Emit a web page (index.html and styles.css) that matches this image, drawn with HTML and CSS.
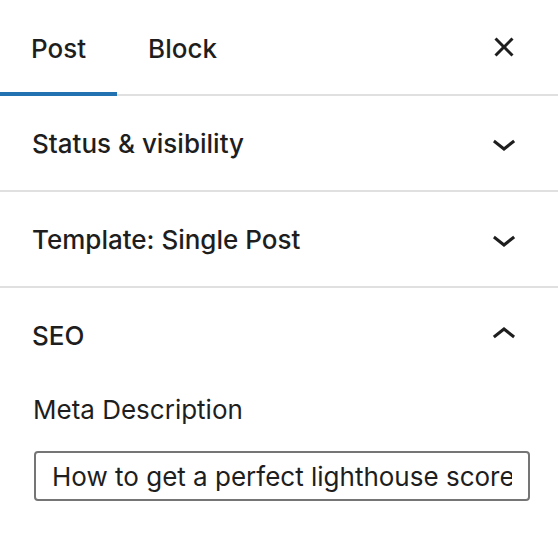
FILE: index.html
```html
<!DOCTYPE html>
<html lang="en">
<head>
<meta charset="utf-8">
<title>Post settings</title>
<link rel="stylesheet" href="styles.css">
</head>
<body>
<div class="sidebar">
  <div class="tabs">
    <div class="tab is-active">Post</div>
    <div class="tab">Block</div>
    <button class="icon-btn close" aria-label="Close settings">
      <svg viewBox="0 0 24 24" width="48" height="48"><path d="M12 13.06l3.712 3.713 1.061-1.06L13.061 12l3.713-3.712-1.06-1.06L12 10.938 8.288 7.227l-1.061 1.06L10.939 12l-3.712 3.712 1.06 1.061L12 13.061z"/></svg>
    </button>
  </div>

  <div class="panel">
    <div class="panel-toggle">
      <span class="panel-title">Status &amp; visibility</span>
      <span class="icon-btn"><svg viewBox="0 0 24 24" width="48" height="48"><path d="M17.5 11.6L12 16l-5.5-4.4.9-1.2L12 14l4.6-3.6 1 1.2z"/></svg></span>
    </div>
  </div>

  <div class="panel">
    <div class="panel-toggle">
      <span class="panel-title">Template: Single Post</span>
      <span class="icon-btn"><svg viewBox="0 0 24 24" width="48" height="48"><path d="M17.5 11.6L12 16l-5.5-4.4.9-1.2L12 14l4.6-3.6 1 1.2z"/></svg></span>
    </div>
  </div>

  <div class="panel is-open">
    <div class="panel-toggle">
      <span class="panel-title">SEO</span>
      <span class="icon-btn"><svg viewBox="0 0 24 24" width="48" height="48"><path d="M6.5 12.4L12 8l5.5 4.4-.9 1.2L12 10l-4.6 3.6-1-1.2z"/></svg></span>
    </div>
    <div class="panel-body">
      <label class="field-label" for="meta">Meta Description</label>
      <input id="meta" class="field-input" type="text" value="How to get a perfect lighthouse score in WordPress">
    </div>
  </div>
</div>
</body>
</html>
```
FILE: styles.css
```css
html, body {
  margin: 0;
  padding: 0;
  background: #fff;
}
body {
  font-family: Inter, "Liberation Sans", Arial, sans-serif;
  color: #1e1e1e;
}
.sidebar {
  width: 558px;
}
.tabs {
  display: flex;
  align-items: center;
  height: 94px;
  border-bottom: 2px solid #e0e0e0;
}
.tab {
  align-self: flex-start;
  height: 96px;
  margin-bottom: -2px;
  box-sizing: border-box;
  padding: 0 31px;
  display: flex;
  align-items: center;
  font-size: 26px;
  font-weight: 500;
}
.tab.is-active {
  box-shadow: inset 0 -4px 0 #2271b1;
}
.icon-btn {
  display: flex;
  width: 48px;
  height: 48px;
  padding: 0;
  border: 0;
  background: none;
  fill: #1e1e1e;
}
.close {
  margin-left: auto;
  margin-right: 30px;
}
.panel {
  border-bottom: 2px solid #e0e0e0;
}
.panel.is-open {
  border-bottom: 0;
}
.panel-toggle {
  height: 94px;
  display: flex;
  align-items: center;
  justify-content: space-between;
  padding: 0 30px 0 32px;
}
.panel-title {
  font-size: 26px;
  font-weight: 500;
}
.panel-body {
  padding: 10px 28px 0 33px;
  display: flex;
  flex-direction: column;
}
.field-label {
  font-size: 26px;
  line-height: 36px;
  font-weight: 400;
}
.field-input {
  margin-top: 23px;
  width: 496px;
  height: 50px;
  box-sizing: border-box;
  margin-left: 1px;
  border: 2px solid #757575;
  border-radius: 4px;
  padding: 0 16px;
  font-family: Inter, "Liberation Sans", Arial, sans-serif;
  font-size: 26px;
  color: #1e1e1e;
  background: #fff;
  outline: none;
}
```
